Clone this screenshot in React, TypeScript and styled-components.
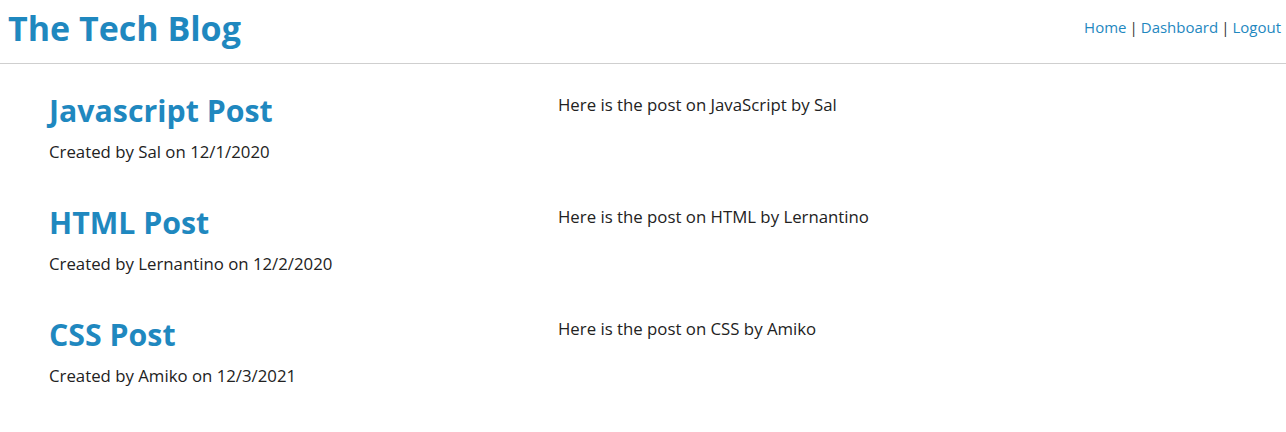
import React from "react";
import styled, { createGlobalStyle } from "styled-components";

const Global = createGlobalStyle`
  body {
    margin: 0;
    font-family: "Open Sans", "Noto Sans", sans-serif;
    color: #222;
    background: #fff;
  }
`;

const Header = styled.header`
  display: flex;
  justify-content: space-between;
  align-items: center;
  height: 63px;
  padding: 0 5px 0 8px;
  border-bottom: 1px solid #cfcfcf;
`;

const Title = styled.h1`
  margin: 0;
  font-size: 34px;
  font-weight: 700;
  color: #1f88bf;
  line-height: 1;
  transform: translateY(-4px);
`;

const Nav = styled.nav`
  display: flex;
  align-items: center;
  gap: 3px;
  font-size: 15px;
  transform: translateY(-5px);
`;

const NavLink = styled.a`
  color: #1f88bf;
  text-decoration: none;
`;

const Sep = styled.span`
  color: #333;
`;

const Posts = styled.main`
  padding: 25px 0 0 49px;
`;

const Row = styled.section`
  display: grid;
  grid-template-columns: 509px 1fr;
  height: 112px;
`;

const PostTitle = styled.h2`
  margin: 0;
  font-size: 30.3px;
  line-height: 44px;
  font-weight: 700;
  color: #1f88bf;
`;

const Meta = styled.p`
  margin: 7px 0 0;
  font-size: 16.8px;
  line-height: 24px;
`;

const Body = styled.p`
  margin: 4px 0 0;
  font-size: 16.8px;
  line-height: 24px;
`;

const posts = [
  { title: "Javascript Post", author: "Sal", date: "12/1/2020", body: "Here is the post on JavaScript by Sal" },
  { title: "HTML Post", author: "Lernantino", date: "12/2/2020", body: "Here is the post on HTML by Lernantino" },
  { title: "CSS Post", author: "Amiko", date: "12/3/2021", body: "Here is the post on CSS by Amiko" },
];

export default function App() {
  return (
    <>
      <Global />
      <Header>
        <Title>The Tech Blog</Title>
        <Nav>
          <NavLink href="#">Home</NavLink>
          <Sep>|</Sep>
          <NavLink href="#">Dashboard</NavLink>
          <Sep>|</Sep>
          <NavLink href="#">Logout</NavLink>
        </Nav>
      </Header>
      <Posts>
        {posts.map((p) => (
          <Row key={p.title}>
            <div>
              <PostTitle>{p.title}</PostTitle>
              <Meta>
                Created by {p.author} on {p.date}
              </Meta>
            </div>
            <Body>{p.body}</Body>
          </Row>
        ))}
      </Posts>
    </>
  );
}
